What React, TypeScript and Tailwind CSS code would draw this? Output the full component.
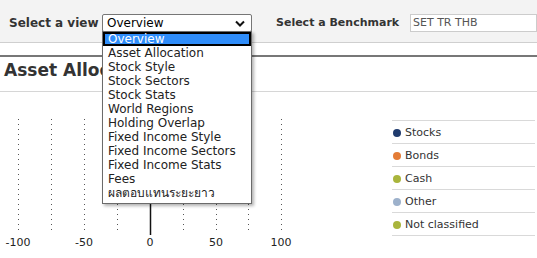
import React from 'react';

const views = [
  'Overview',
  'Asset Allocation',
  'Stock Style',
  'Stock Sectors',
  'Stock Stats',
  'World Regions',
  'Holding Overlap',
  'Fixed Income Style',
  'Fixed Income Sectors',
  'Fixed Income Stats',
  'Fees',
  'ผลตอบแทนระยะยาว',
];

const legend = [
  { name: 'Stocks', color: '#1f3b6e' },
  { name: 'Bonds', color: '#e47c36' },
  { name: 'Cash', color: '#a9b53c' },
  { name: 'Other', color: '#9db1cb' },
  { name: 'Not classified', color: '#a9b53c' },
];

const gridX = [18, 51, 84, 117, 183, 216, 248, 281];
const ticks = [
  { x: 18, label: '-100' },
  { x: 84, label: '-50' },
  { x: 150, label: '0' },
  { x: 216, label: '50' },
  { x: 281, label: '100' },
];

const ViewSelect = () => (
  <div className="relative w-[150px]">
    <div className="flex h-[18px] items-center justify-between rounded-[2px] border border-[#767676] bg-white pl-[4px] pr-[6px] text-[12px] text-black">
      <span>Overview</span>
      <svg width="10" height="7" viewBox="0 0 10 7">
        <path d="M1 1.5 L5 5.5 L9 1.5" fill="none" stroke="#111" strokeWidth="2" />
      </svg>
    </div>
    {/* open option list */}
    <div className="absolute left-0 top-[17px] z-10 w-[150px] border border-[#6b6b6b] bg-white pb-[3px] shadow-[2px_2px_3px_rgba(0,0,0,0.3)]">
      {views.map((v, i) => (
        <div
          key={v}
          className={
            i === 0
              ? 'h-[14px] border-[2px] border-black bg-[#2f8dfa] pl-[3px] text-[12px] leading-[10px] text-white'
              : 'h-[14px] pl-[5px] text-[12px] leading-[14px] text-[#222]'
          }
        >
          {v}
        </div>
      ))}
    </div>
  </div>
);

export default function App() {
  return (
    <div
      className="relative h-[258px] w-[537px] overflow-hidden bg-white text-[#333]"
      style={{ fontFamily: '"DejaVu Sans", Verdana, "Noto Sans", sans-serif' }}
    >
      {/* toolbar */}
      <div className="flex h-[43px] items-start border-b border-[#cfcfcf] bg-[#f3f3f3] pt-[14px]">
        <div className="w-[102px] whitespace-nowrap pl-[9px] text-[12px] font-bold leading-[18px] text-[#333]">Select a view</div>
        <ViewSelect />
        <div className="ml-[24px] w-[134px] whitespace-nowrap text-[11px] font-bold leading-[18px] text-[#333]">Select a Benchmark</div>
        <div className="h-[18px] flex-1 whitespace-nowrap border border-[#cccccc] bg-white pl-[2px] text-[11px] leading-[16px] text-[#555]">
          SET TR THB
        </div>
      </div>

      <div className="mt-[12px] border-t-2 border-[#777]" />
      <div className="h-[35px] border-b border-[#d6d6d6] pt-[3px] pl-[4px] text-[17px] font-bold leading-[20px] text-[#333]">
        Asset Allocation
      </div>

      {/* chart + legend */}
      <div className="flex">
        <svg width="300" height="164" className="shrink-0">
          {gridX.map((x) => (
            <line key={x} x1={x + 0.5} y1={27} x2={x + 0.5} y2={141} stroke="#555" strokeWidth="1" strokeDasharray="1 4" />
          ))}
          <line x1={150.5} y1={27} x2={150.5} y2={143} stroke="#111" strokeWidth="1.5" />
          {ticks.map((t) => (
            <text
              key={t.label}
              x={t.x}
              y={151}
              textAnchor="middle"
              dominantBaseline="middle"
              fontSize="11"
              fill="#222"
              fontFamily='"DejaVu Sans", Verdana, sans-serif'
            >
              {t.label}
            </text>
          ))}
        </svg>
        <div className="ml-[92px] w-[143px] pt-[28px]">
          {legend.map((l, i) => (
            <div
              key={l.name}
              className={
                i === legend.length - 1
                  ? 'flex h-[24px] items-center gap-[4px] border-y border-[#d9d9d9] pl-[1px] pt-[2px] text-[11px] text-[#333]'
                  : 'flex h-[23px] items-center gap-[4px] border-t border-[#d9d9d9] pl-[1px] pt-[2px] text-[11px] text-[#333]'
              }
            >
              <span className="inline-block h-[8px] w-[8px] rounded-full" style={{ backgroundColor: l.color }} />
              <span>{l.name}</span>
            </div>
          ))}
        </div>
      </div>
    </div>
  );
}
